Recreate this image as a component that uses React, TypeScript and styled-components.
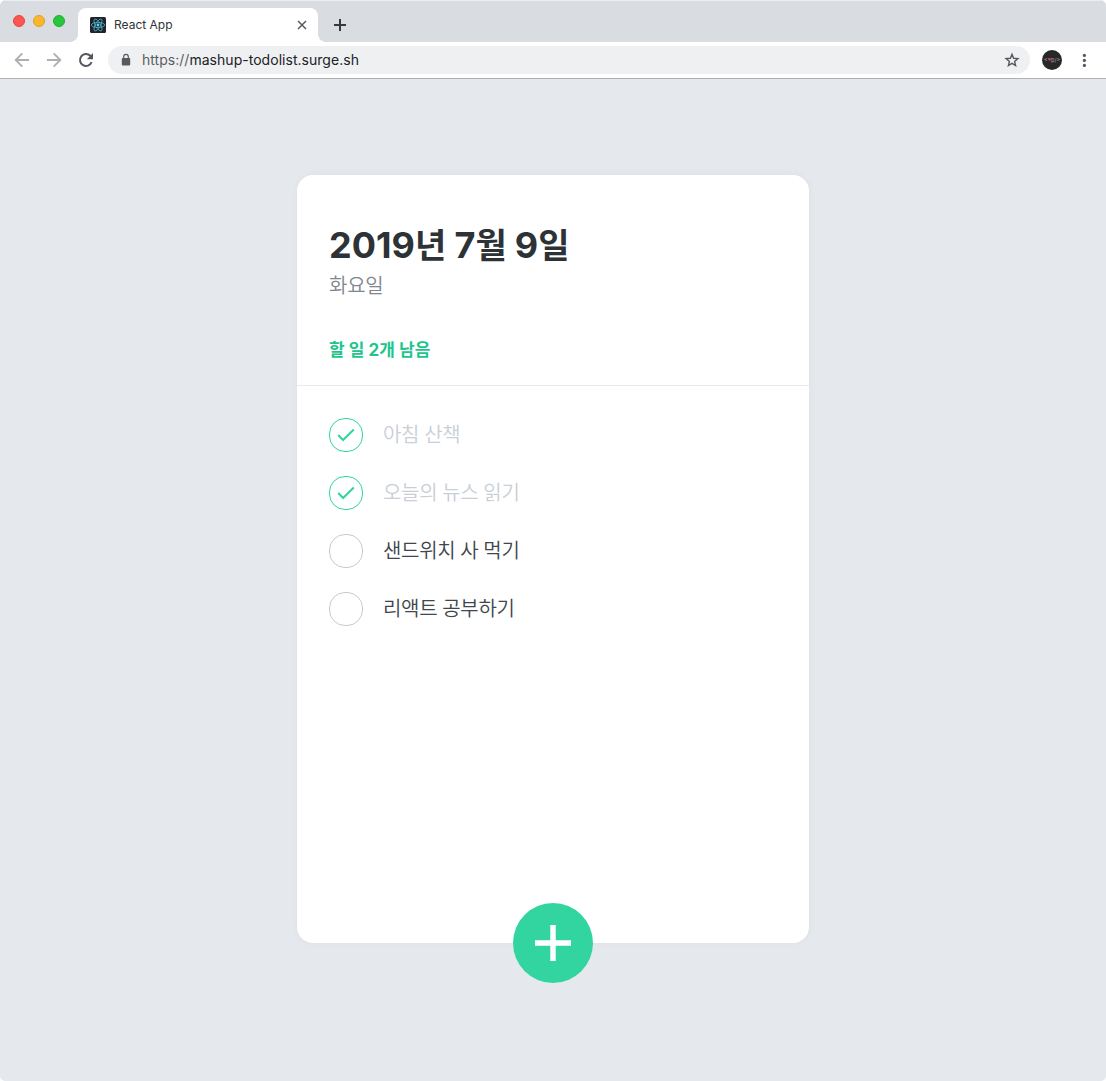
import React from "react";
import styled, { createGlobalStyle } from "styled-components";

const GlobalStyle = createGlobalStyle`
  html { background: #ffffff; }
  body { margin: 0; }
  * { box-sizing: border-box; }
`;

const Browser = styled.div`
  width: 1106px;
  height: 1081px;
  display: flex;
  flex-direction: column;
  overflow: hidden;
  border-radius: 6px 6px 5px 5px;
  background: #e5e9ed;
  font-family: Inter, "Noto Sans CJK KR", sans-serif;
`;

const TabBar = styled.div`
  height: 42px;
  flex: none;
  display: flex;
  align-items: flex-end;
  background: #d9dce1;
  border-top: 1px solid #eceef0;
`;

const Lights = styled.div`
  display: flex;
  align-self: flex-start;
  gap: 8px;
  padding: 14px 0 0 13px;
  width: 70px;
`;

const Light = styled.span<{ $fill: string; $edge: string }>`
  flex: none;
  width: 12px;
  height: 12px;
  border-radius: 50%;
  background: ${(p) => p.$fill};
  border: 1px solid ${(p) => p.$edge};
`;

const Flare = styled.span<{ $side: "left" | "right" }>`
  width: 8px;
  height: 8px;
  background: radial-gradient(
    circle at ${(p) => (p.$side === "left" ? "0 0" : "100% 0")},
    #d9dce1 7.6px,
    #ffffff 8.2px
  );
`;

const Tab = styled.div`
  width: 240px;
  height: 34px;
  display: flex;
  align-items: center;
  padding: 0 10px 0 12px;
  background: #ffffff;
  border-radius: 8px 8px 0 0;
`;

const TabTitle = styled.span`
  flex: 1;
  margin-left: 8px;
  font-size: 12px;
  line-height: 16px;
  color: #303337;
`;

const NewTab = styled.div`
  display: flex;
  align-self: flex-start;
  padding: 17px 0 0 7px;
`;

const Toolbar = styled.div`
  height: 37px;
  flex: none;
  display: flex;
  align-items: center;
  padding: 0 14px;
  background: #ffffff;
  border-bottom: 1px solid #aeb0b5;
`;

const NavIcons = styled.div`
  display: flex;
  gap: 16px;
  width: 94px;
`;

const Address = styled.div`
  width: 922px;
  height: 28px;
  display: flex;
  align-items: center;
  padding: 0 10px 0 12px;
  border-radius: 14px;
  background: #eff0f2;
`;

const Url = styled.span`
  flex: 1;
  margin-left: 10px;
  font-size: 14px;
  line-height: 18px;
  letter-spacing: 0.03px;
  color: #202226;
`;

const Scheme = styled.span`
  color: #5a5e63;
`;

const Avatar = styled.div`
  width: 20px;
  height: 20px;
  margin: 0 16px 0 12px;
  display: flex;
  align-items: center;
  justify-content: center;
  border-radius: 50%;
  background: #282829;
  color: #a9a9ac;
  font-size: 5.5px;
  line-height: 8px;
`;

const Heart = styled.span`
  color: #e0355f;
  font-size: 3.5px;
`;

const Page = styled.main`
  flex: 1;
  display: flex;
  justify-content: center;
  align-items: flex-start;
  padding-top: 96px;
`;

const Card = styled.section`
  position: relative;
  width: 512px;
  height: 768px;
  display: flex;
  flex-direction: column;
  border-radius: 16px;
  background: #ffffff;
  box-shadow: 0 0 8px rgba(0, 0, 0, 0.04);
`;

const Head = styled.header`
  height: 211px;
  padding: 49px 32px 0;
  border-bottom: 1px solid #e7eaed;
`;

const DateTitle = styled.h1`
  margin: 0;
  height: 43px;
  display: flex;
  align-items: baseline;
  font-size: 36px;
  line-height: 43px;
  font-weight: 700;
  color: #2d3237;
  white-space: pre;
`;

const Digits = styled.span`
  letter-spacing: 0.05px;
`;

const Unit = styled.span`
  font-size: 34px;
`;

const Weekday = styled.div`
  margin-top: 5px;
  height: 28px;
  font-size: 20px;
  line-height: 28px;
  letter-spacing: -0.25px;
  font-weight: 350;
  color: #7f868e;
`;

const Remaining = styled.div`
  margin-top: 39px;
  height: 22px;
  font-size: 17px;
  line-height: 22px;
  font-weight: 700;
  letter-spacing: 0.05px;
  color: #20c58d;
  white-space: pre;
`;

const List = styled.ul`
  flex: 1;
  margin: 0;
  padding: 20px 32px 48px;
  list-style: none;
`;

const Item = styled.li`
  height: 58px;
  display: flex;
  align-items: center;
`;

const Check = styled.span<{ $done: boolean }>`
  width: 34px;
  height: 34px;
  margin-right: 20px;
  display: flex;
  align-items: center;
  justify-content: center;
  border-radius: 16px;
  border: 1px solid ${(p) => (p.$done ? "#32d5a0" : "#c4cbd3")};
`;

const ItemText = styled.span<{ $done: boolean }>`
  font-size: 20px;
  line-height: 28px;
  font-weight: 350;
  letter-spacing: -0.3px;
  word-spacing: -0.4px;
  color: ${(p) => (p.$done ? "#c9cfd6" : "#40464c")};
`;

const AddButton = styled.button`
  position: absolute;
  left: 50%;
  bottom: -40px;
  width: 80px;
  height: 80px;
  margin-left: -40px;
  padding: 0;
  display: flex;
  align-items: center;
  justify-content: center;
  border: 0;
  border-radius: 50%;
  background: #32d5a0;
`;

const ReactLogo = () => (
  <svg width="16" height="16" viewBox="0 0 16 16">
    <rect width="16" height="16" rx="1.5" fill="#202327" />
    <g fill="none" stroke="#4fb3d0" strokeWidth="0.8">
      <ellipse cx="8" cy="8" rx="6.7" ry="2.6" />
      <ellipse cx="8" cy="8" rx="6.7" ry="2.6" transform="rotate(60 8 8)" />
      <ellipse cx="8" cy="8" rx="6.7" ry="2.6" transform="rotate(120 8 8)" />
    </g>
    <circle cx="8" cy="8" r="1.4" fill="#61d5f5" />
  </svg>
);

const Arrow = ({ flip }: { flip?: boolean }) => (
  <svg width="16" height="16" viewBox="0 0 16 16" fill="none" stroke="#adafb2" strokeWidth="1.9">
    <path
      d="M15 8H2.4M8.3 1.4 1.7 8l6.6 6.6"
      transform={flip ? "matrix(-1 0 0 1 16 0)" : undefined}
    />
  </svg>
);

const Reload = () => (
  <svg width="16" height="16" viewBox="0 0 16 16">
    <path d="M13.6 10.1A6 6 0 1 1 12.3 3.8L13.4 4.9" fill="none" stroke="#54575c" strokeWidth="2" />
    <path d="M15 1v6.2H8.8z" fill="#54575c" />
  </svg>
);

const Lock = () => (
  <svg width="12" height="14" viewBox="0 0 12 14">
    <rect x="1.8" y="5" width="8.4" height="7.4" rx="0.9" fill="#56595e" />
    <path d="M3.7 5V3.6a2.3 2.3 0 0 1 4.6 0V5" fill="none" stroke="#56595e" strokeWidth="1.2" />
  </svg>
);

const Star = () => (
  <svg width="16" height="16" viewBox="0 0 16 16">
    <path
      d="m8 2.3 1.6 4 4.3.3-3.3 2.8 1 4.2L8 11.3l-3.6 2.3 1-4.2-3.3-2.8 4.3-.3z"
      fill="none"
      stroke="#55595e"
      strokeWidth="1.4"
    />
  </svg>
);

const items = [
  { text: "아침 산책", done: true },
  { text: "오늘의 뉴스 읽기", done: true },
  { text: "샌드위치 사 먹기", done: false },
  { text: "리액트 공부하기", done: false },
];

export default function App() {
  return (
    <Browser>
      <GlobalStyle />
      <TabBar>
        <Lights>
          <Light $fill="#fb5650" $edge="#e4463f" />
          <Light $fill="#fcb62c" $edge="#e0a023" />
          <Light $fill="#28c63c" $edge="#1fae30" />
        </Lights>
        <Flare $side="left" />
        <Tab>
          <ReactLogo />
          <TabTitle>React App</TabTitle>
          <svg width="12" height="12" viewBox="0 0 12 12" stroke="#56595d" strokeWidth="1.5">
            <path d="m2 2 8 8m0-8-8 8" />
          </svg>
        </Tab>
        <Flare $side="right" />
        <NewTab>
          <svg width="14" height="14" viewBox="0 0 14 14" stroke="#35383c" strokeWidth="2">
            <path d="M7 1v12M1 7h12" />
          </svg>
        </NewTab>
      </TabBar>
      <Toolbar>
        <NavIcons>
          <Arrow />
          <Arrow flip />
          <Reload />
        </NavIcons>
        <Address>
          <Lock />
          <Url>
            <Scheme>https://</Scheme>mashup-todolist.surge.sh
          </Url>
          <Star />
        </Address>
        <Avatar>
          &lt;<Heart>♥</Heart>p/&gt;
        </Avatar>
        <svg width="12" height="16" viewBox="0 0 12 16" fill="#54575c">
          <circle cx="6.4" cy="3.4" r="1.6" />
          <circle cx="6.4" cy="8.4" r="1.6" />
          <circle cx="6.4" cy="13.4" r="1.6" />
        </svg>
      </Toolbar>
      <Page>
        <Card>
          <Head>
            <DateTitle>
              <Digits>2019</Digits>
              <Unit>년 </Unit>
              <Digits>7</Digits>
              <Unit>월 </Unit>
              <Digits>9</Digits>
              <Unit>일</Unit>
            </DateTitle>
            <Weekday>화요일</Weekday>
            <Remaining>할 일 2개 남음</Remaining>
          </Head>
          <List>
            {items.map((item) => (
              <Item key={item.text}>
                <Check $done={item.done}>
                  {item.done && (
                    <svg width="18" height="16" viewBox="0 0 18 16" fill="none" stroke="#32d5a0" strokeWidth="2.1">
                      <path d="m1.2 8 4.9 5L16.8 2.4" />
                    </svg>
                  )}
                </Check>
                <ItemText $done={item.done}>{item.text}</ItemText>
              </Item>
            ))}
          </List>
          <AddButton aria-label="Add">
            <svg width="36" height="36" viewBox="0 0 36 36" stroke="#ffffff" strokeWidth="5.4">
              <path d="M18 0v36M0 18h36" />
            </svg>
          </AddButton>
        </Card>
      </Page>
    </Browser>
  );
}
